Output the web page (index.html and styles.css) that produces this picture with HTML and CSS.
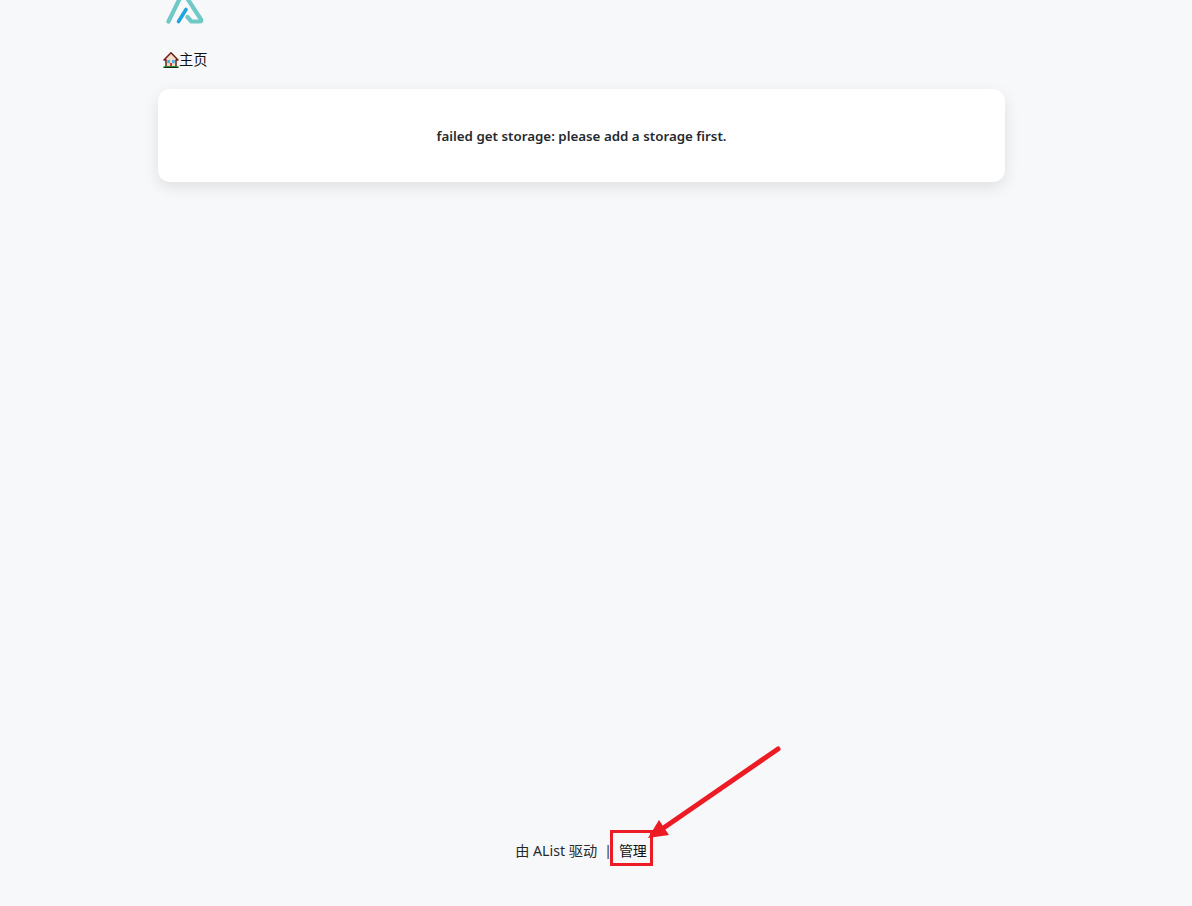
FILE: index.html

```html
<!DOCTYPE html>
<html lang="zh-CN">
<head>
    <meta charset="UTF-8">
    <meta name="viewport" content="width=device-width, initial-scale=1.0">
    <title>AList</title>
    <link rel="stylesheet" href="styles.css">
</head>
<body>
<div class="container">
    <div class="logo">
        <svg width="40" height="24" viewBox="0 0 40 24">
            <path d="M3.5 21.5 L15 -2" fill="none" stroke="#70c9c6" stroke-width="4.2" stroke-linecap="round"/>
            <path d="M22 -2 L36 19.5 Q37 21.5 34.5 21.5 L26.5 21.5 L22.5 17" fill="none" stroke="#70c9c6" stroke-width="4.2" stroke-linecap="round" stroke-linejoin="round"/>
            <path d="M13.5 21.5 L21 9.5" fill="none" stroke="#1fa4dc" stroke-width="3.6" stroke-linecap="round"/>
        </svg>
    </div>

    <nav class="breadcrumb">
        <svg class="home-icon" width="16" height="16" viewBox="0 0 16 16">
            <path d="M8 0.8 L1 8 L3 8 L3 15 L13 15 L13 8 L15 8 Z" fill="#f4dccb" stroke="#6e1f14" stroke-width="1.5" stroke-linejoin="round"/>
            <rect x="4.3" y="8" width="2.7" height="3.2" fill="#45aee8"/>
            <rect x="9" y="8" width="2.7" height="3.2" fill="#45aee8"/>
            <rect x="7" y="11" width="2" height="4" fill="#c2401f"/>
            <rect x="0.5" y="14.2" width="15" height="1.2" fill="#06a02c"/>
            <rect x="0.5" y="15.2" width="15" height="0.8" fill="#111"/>
        </svg>
        <a href="#">主页</a>
    </nav>

    <div class="card">
        <p>failed get storage: please add a storage first.</p>
    </div>

    <footer class="footer">
        <span class="powered">由 AList 驱动</span>
        <span class="sep">|</span>
        <a href="#" class="manage">管理</a>
    </footer>
</div>

<!-- red arrow from the screenshot annotation -->
<svg class="arrow" width="150" height="105" viewBox="0 0 150 105">
    <path d="M130 4 L14 84" stroke="#ed1c24" stroke-width="5" stroke-linecap="round"/>
    <path d="M0 93 L21 90 L11 75 Z" fill="#ed1c24"/>
</svg>
</body>
</html>
```

FILE: styles.css

```css
html, body {
    height: 100%;
}

body {
    margin: 0;
    background-color: #f7f8fa;
    color: #24292e;
    font-family: "Noto Sans", "Noto Sans CJK SC", sans-serif;
    font-size: 14px;
}

a {
    color: #111;
    text-decoration: none;
}

.container {
    width: 847px;
    height: 906px;
    margin-left: 158px;
    display: flex;
    flex-direction: column;
}

.logo {
    height: 24px;
    padding-left: 7px;
}

.logo svg {
    display: block;
}

.breadcrumb {
    margin-top: 24px;
    height: 24px;
    padding-left: 5px;
    display: flex;
    align-items: center;
    line-height: 22px;
}

.breadcrumb a {
    font-size: 14.3px;
}

.home-icon {
    display: block;
}

.card {
    margin-top: 17px;
    height: 93px;
    display: flex;
    justify-content: center;
    align-items: center;
    background: #fff;
    border-radius: 12px;
    box-shadow: 0 5px 15px rgba(0, 0, 0, 0.1);
}

.card p {
    margin: 1px 0 0;
    font-size: 13.35px;
    font-weight: 600;
}

.footer {
    margin-top: auto;
    margin-bottom: 42px;
    padding-right: 1px;
    height: 26px;
    display: flex;
    justify-content: center;
    align-items: center;
    gap: 9px;
    line-height: 20px;
}

.powered {
    font-size: 14.2px;
}

.sep {
    margin: 0 2px 0 -2px;
    color: #555;
    font-weight: 600;
}

.manage {
    outline: 3px solid #ed1c24;
    padding: 8px 3px 2px 6px;
    margin: -8px -3px -2px -10px;
}

.arrow {
    position: absolute;
    left: 648px;
    top: 745px;
}
```
